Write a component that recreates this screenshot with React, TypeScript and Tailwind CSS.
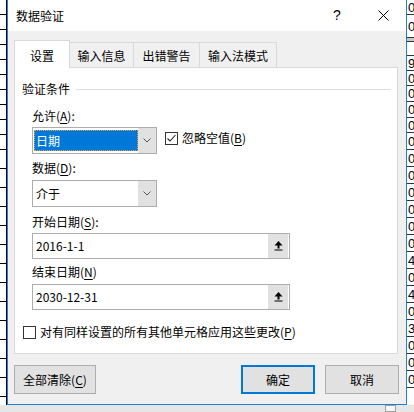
import React from "react";

const leftRows = [15, 15, 15, 15, 15, 15, 15, 15, 15, 15, 19, 19, 19, 19, 19, 19, 19, 19, 19, 19, 19, 19, 19];

const rightRows: [number, string, boolean?][] = [
  [15, "0"],
  [23, "0"],
  [4, "", true],
  [14, ""],
  [15, "9"],
  [15, "0"],
  [16, "0"],
  [16, "0"],
  [15, "0"],
  [17, "0"],
  [17, "0"],
  [17, "0"],
  [17, "0"],
  [17, "0"],
  [17, "0"],
  [17, "0"],
  [17, "4"],
  [17, "0"],
  [17, "4"],
  [17, "0"],
  [17, "3"],
  [17, "0"],
  [17, "0"],
  [17, "0"],
];

function Chevron() {
  return (
    <svg width="8" height="5" viewBox="0 0 8 5">
      <polyline points="0.5,0.5 4,4 7.5,0.5" fill="none" stroke="#5a5a5a" strokeWidth="1" />
    </svg>
  );
}

function RefIcon() {
  return (
    <svg width="9" height="10" viewBox="0 0 9 10">
      <polygon points="4.5,0 0.5,4.5 8.5,4.5" fill="#000" />
      <rect x="3.5" y="4" width="2" height="3.5" fill="#000" />
      <rect x="0.5" y="8.5" width="8" height="1" fill="#000" />
    </svg>
  );
}

function Check({ checked }: { checked?: boolean }) {
  return (
    <div className="w-[13px] h-[13px] border border-[#333] bg-white flex items-center justify-center">
      {checked && (
        <svg width="11" height="11" viewBox="0 0 11 11">
          <polyline points="1.5,5.5 4,8 9.5,2" fill="none" stroke="#222" strokeWidth="1.1" />
        </svg>
      )}
    </div>
  );
}

function Select({ text, focused }: { text: string; focused?: boolean }) {
  return (
    <div className="flex h-[27px] w-[125px] border border-[#adadad] bg-white">
      <div className="flex-1 flex items-center pl-[1px] py-[2px]">
        {focused ? (
          <div className="h-full w-full bg-[#0078d7] text-white border border-dotted border-[#e9a24f] flex items-center pl-[1px]">
            {text}
          </div>
        ) : (
          <div className="pl-[2px]">{text}</div>
        )}
      </div>
      <div className="w-[18px] bg-[#e1e1e1] flex items-center justify-center">
        <Chevron />
      </div>
    </div>
  );
}

function DateInput({ value }: { value: string }) {
  return (
    <div className="flex h-[26px] w-[258px] border border-[#adadad] bg-white">
      <div className="flex-1 flex items-center pl-[3px]">{value}</div>
      <div className="w-[20px] mr-[1px] bg-[#e1e1e1] flex items-center justify-center">
        <RefIcon />
      </div>
    </div>
  );
}

function Label({ children, className = "" }: { children: React.ReactNode; className?: string }) {
  return <div className={`h-[18px] leading-[18px] ml-[17px] ${className}`}>{children}</div>;
}

function U({ children }: { children: React.ReactNode }) {
  return <span className="underline underline-offset-[2px]">{children}</span>;
}

function Dialog() {
  return (
    <div className="w-[400px] h-[405px] border-x border-b border-[#1883d7] flex flex-col bg-[#f0f0f0]">
      {/* title bar */}
      <div className="h-[31px] bg-white flex items-center">
        <div className="pl-[8px] text-[12px]">数据验证</div>
        <div className="flex-1" />
        <div className="w-[46px] h-full flex items-center justify-center font-['Liberation_Sans',sans-serif] text-[14px]">?</div>
        <div className="w-[46px] h-full flex items-center justify-center">
          <svg width="11" height="11" viewBox="0 0 11 11">
            <path d="M0.5 0.5 L10.5 10.5 M10.5 0.5 L0.5 10.5" stroke="#000" strokeWidth="1" fill="none" />
          </svg>
        </div>
      </div>

      <div className="pt-[9px] pl-[6px] pr-[8px]">
        {/* tabs */}
        <div className="flex items-end h-[27px]">
          <div className="relative z-10 -mb-[1px] h-[28px] w-[56px] bg-white border-l border-t border-r border-[#d9d9d9] flex items-center justify-center pt-[2px]">
            设置
          </div>
          <div className="h-[25px] w-[64px] border-t border-r border-[#d9d9d9] flex items-center justify-center pt-[2px]">
            输入信息
          </div>
          <div className="h-[25px] w-[66px] border-t border-r border-[#d9d9d9] flex items-center justify-center pt-[2px]">
            出错警告
          </div>
          <div className="h-[25px] w-[77px] border-t border-r border-[#d9d9d9] flex items-center justify-center pt-[2px]">
            输入法模式
          </div>
        </div>

        {/* panel */}
        <div className="h-[287px] bg-white border border-[#d9d9d9] flex flex-col pt-[12px]">
          <div className="h-[18px] leading-[18px] ml-[7px] mr-[6px] flex items-center">
            <span>验证条件</span>
            <div className="flex-1 h-px bg-[#dcdcdc] ml-[6px]" />
          </div>

          <Label className="mt-[9px]">
            允许(<U>A</U>):
          </Label>
          <div className="mt-[2px] ml-[17px] flex items-start">
            <Select text="日期" focused />
            <div className="ml-[8px] mt-[2px] h-[18px] flex items-center">
              <Check checked />
              <span className="ml-[4px] leading-[18px]">
                忽略空值(<U>B</U>)
              </span>
            </div>
          </div>

          <Label className="mt-[5px]">
            数据(<U>D</U>):
          </Label>
          <div className="mt-[3px] ml-[17px]">
            <Select text="介于" />
          </div>

          <Label className="mt-[6px]">
            开始日期(<U>S</U>):
          </Label>
          <div className="mt-[2px] ml-[17px]">
            <DateInput value="2016-1-1" />
          </div>

          <Label className="mt-[4px]">
            结束日期(<U>N</U>)
          </Label>
          <div className="mt-[3px] ml-[17px]">
            <DateInput value="2030-12-31" />
          </div>

          <div className="mt-[13px] ml-[8px] h-[18px] flex items-center">
            <Check />
            <span className="ml-[4px] leading-[18px]">
              对有同样设置的所有其他单元格应用这些更改(<U>P</U>)
            </span>
          </div>
        </div>
      </div>

      {/* buttons */}
      <div className="mt-[11px] pl-[6px] pr-[7px] flex">
        <button className="h-[29px] w-[82px] bg-[#e1e1e1] border border-[#adadad]">
          全部清除(<U>C</U>)
        </button>
        <div className="flex-1" />
        <button className="h-[29px] w-[74px] bg-[#e1e1e1] border-2 border-[#0078d7]">确定</button>
        <button className="h-[29px] w-[74px] ml-[10px] bg-[#e1e1e1] border border-[#adadad]">取消</button>
      </div>
    </div>
  );
}

export default function App() {
  return (
    <div className="w-[414px] h-[412px] overflow-hidden bg-[#e6e6e6] flex flex-col text-[12px] text-black font-['Noto_Sans_CJK_SC','Microsoft_YaHei',sans-serif]">
      <div className="flex h-[405px]">
        <div className="w-[7px] h-full bg-white border-r border-black flex flex-col overflow-hidden">
          {leftRows.map((h, i) => (
            <div key={i} className="border-b border-black shrink-0" style={{ height: h }} />
          ))}
        </div>
        <Dialog />
        <div className="w-[7px] h-full bg-white flex flex-col overflow-hidden font-['Liberation_Sans',sans-serif] text-[13px]">
          {rightRows.map(([h, t, gray], i) => (
            <div
              key={i}
              className={`shrink-0 border-b border-[#333] flex items-center pl-[1px] overflow-hidden leading-none ${gray ? "bg-[#c8c8c8]" : ""}`}
              style={{ height: h }}
            >
              {t}
            </div>
          ))}
        </div>
      </div>
      <div className="h-[7px] flex">
        <div className="ml-[385px] w-[11px] h-full border border-[#a0a0a0] bg-[#f5f5f5]" />
      </div>
    </div>
  );
}
